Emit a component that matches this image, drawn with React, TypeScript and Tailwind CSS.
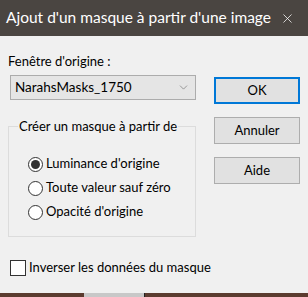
import { ChevronDown, X } from "lucide-react";

const font = { fontFamily: 'Lato, "Noto Sans", sans-serif' };

function Radio({ label, checked }: { label: string; checked?: boolean }) {
  return (
    <div className="flex h-[24px] items-center gap-[3px]">
      <span className="flex h-[15px] w-[15px] items-center justify-center rounded-full border border-[#333333] bg-white">
        {checked && <span className="h-[9px] w-[9px] rounded-full bg-[#333333]" />}
      </span>
      <span className="whitespace-nowrap text-[13px] text-black">{label}</span>
    </div>
  );
}

function Button({ label, primary }: { label: string; primary?: boolean }) {
  return (
    <div
      className={
        "flex h-[27px] w-[86px] items-center justify-center bg-[#e1e1e1] text-[13px] text-black " +
        (primary ? "border-2 border-[#0078d7]" : "border border-[#adadad]")
      }
    >
      {label}
    </div>
  );
}

export default function App() {
  return (
    <div className="flex h-[297px] w-[308px] flex-col overflow-hidden bg-[#f0f0f0]" style={font}>
      <div className="flex h-[36px] shrink-0 items-center justify-between bg-[#4a4541] pl-[6px] pr-[13px] text-white">
        <span className="whitespace-nowrap text-[15.5px] leading-none">Ajout d'un masque à partir d'une image</span>
        <X size={15} strokeWidth={1.2} />
      </div>

      <div className="flex flex-1 gap-[18px] pl-[8px] pt-[17px]">
        <div className="flex w-[188px] flex-col">
          <span className="whitespace-nowrap text-[13px] leading-[16px] text-black">Fenêtre d'origine :</span>
          <div className="ml-[2px] mt-[6px] flex h-[25px] w-[186px] items-center justify-between border border-[#acacac] bg-[#e5e5e5] pl-[4px] pr-[5px]">
            <span className="text-[13.5px] text-black">NarahsMasks_1750</span>
            <ChevronDown size={13} strokeWidth={1} className="text-[#555555]" />
          </div>

          <div className="relative mt-[26px] h-[111px] w-[188px] border border-[#dcdcdc]">
            <span className="absolute left-[9px] top-[-9px] whitespace-nowrap bg-[#f0f0f0] px-[1px] text-[13px] leading-[16px] text-black">
              Créer un masque à partir de
            </span>
            <div className="flex flex-col pl-[19px] pt-[25px]">
              <Radio label="Luminance d'origine" checked />
              <Radio label="Toute valeur sauf zéro" />
              <Radio label="Opacité d'origine" />
            </div>
          </div>

          <div className="ml-[2px] mt-[21px] flex items-center gap-[3px]">
            <span className="h-[16px] w-[16px] shrink-0 border border-[#333333] bg-white" />
            <span className="whitespace-nowrap text-[13px] text-black">Inverser les données du masque</span>
          </div>
        </div>

        <div className="flex flex-col gap-[13px] pt-[24px]">
          <Button label="OK" primary />
          <Button label="Annuler" />
          <Button label="Aide" />
        </div>
      </div>

      <div className="flex h-[4px] shrink-0 bg-[#5b3b2f]">
        <div className="w-[84px]" />
        <div className="w-[60px] bg-[#c8c8c8]" />
        <div className="w-[1px] bg-[#222222]" />
      </div>
    </div>
  );
}
